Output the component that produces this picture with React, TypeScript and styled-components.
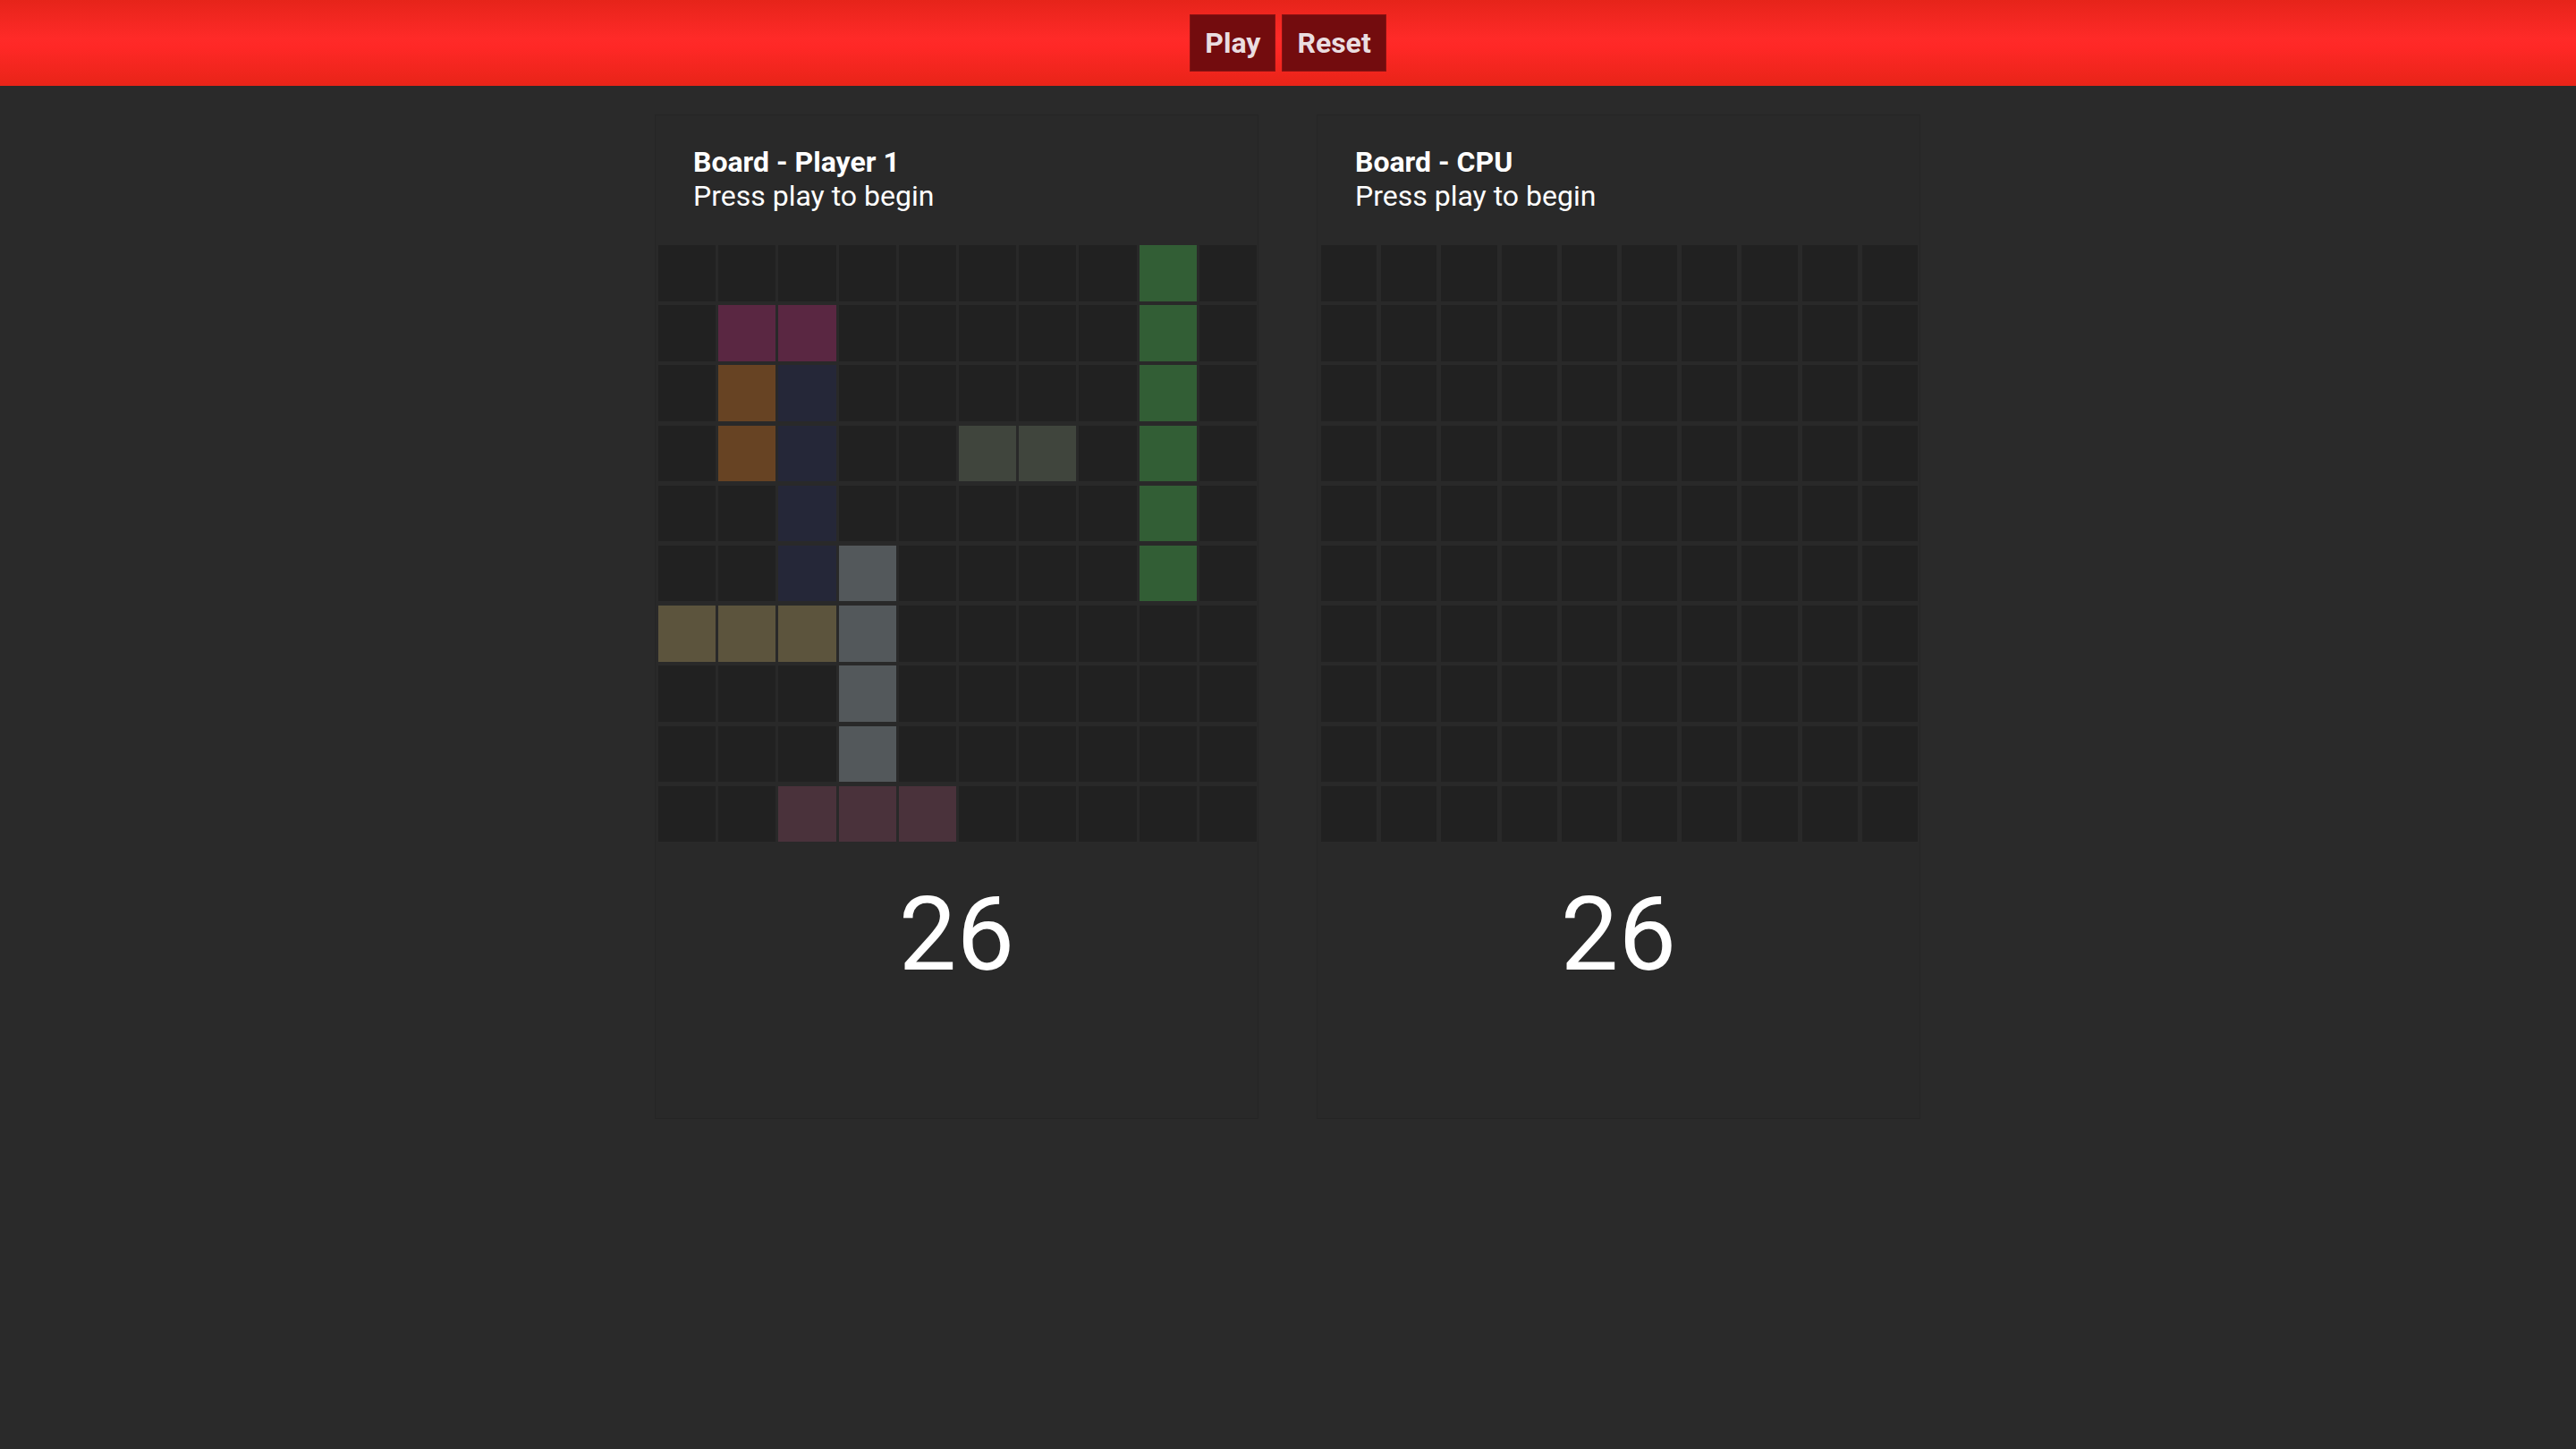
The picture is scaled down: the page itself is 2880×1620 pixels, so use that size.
import React from "react";
import styled, { createGlobalStyle } from "styled-components";

const GlobalStyle = createGlobalStyle`
  html, body {
    margin: 0;
    padding: 0;
    background: #2a2a2a;
    font-family: Roboto, "Liberation Sans", Arial, sans-serif;
    color: #ffffff;
  }
  #root {
    min-height: 1620px;
    background: #2a2a2a;
  }
`;

const Header = styled.header`
  height: 96px;
  display: flex;
  align-items: center;
  justify-content: center;
  gap: 7px;
  background: linear-gradient(to bottom, #e6241a 0%, #ff2a28 45%, #ff2826 55%, #e82418 100%);
`;

const HeaderButton = styled.button`
  height: 64px;
  padding: 0 16px;
  border: 1px solid #8a1212;
  background: #730c0e;
  color: #eadde0;
  font-family: Roboto, "Liberation Sans", Arial, sans-serif;
  font-weight: 700;
  font-size: 32px;
  cursor: pointer;
`;

const Main = styled.main`
  display: flex;
  justify-content: center;
  gap: 65px;
  padding-top: 32px;
  padding-right: 1px;
`;

const Panel = styled.section`
  width: 675px;
  height: 1123px;
  box-sizing: border-box;
  border: 1px solid #252525;
  background: #292929;
  display: flex;
  flex-direction: column;
`;

const PanelHead = styled.div`
  padding: 33px 42px 0;
  font-size: 32px;
  line-height: normal;
`;

const Title = styled.div`
  font-weight: 700;
`;

const Subtitle = styled.div`
  font-weight: 400;
`;

const Grid = styled.div<{ $pl: number; $cg: number; $w: number }>`
  margin-top: 36px;
  margin-left: ${(p) => p.$pl}px;
  width: ${(p) => p.$w}px;
  display: grid;
  grid-template-columns: repeat(10, 1fr);
  grid-auto-rows: 62.5px;
  column-gap: ${(p) => p.$cg}px;
  row-gap: 4.7px;
`;

const Cell = styled.div<{ $c?: string }>`
  background: ${(p) => p.$c || "#212121"};
`;

const Score = styled.div`
  margin-top: 35px;
  text-align: center;
  font-size: 115px;
  font-weight: 400;
  line-height: 1.2;
`;

const P = "#5a2742";
const B = "#674323";
const N = "#252738";
const G = "#40453d";
const S = "#53585b";
const O = "#5c543d";
const V = "#325e35";
const M = "#4a323b";

const playerBoard: (string | null)[][] = [
  [null, null, null, null, null, null, null, null, V, null],
  [null, P, P, null, null, null, null, null, V, null],
  [null, B, N, null, null, null, null, null, V, null],
  [null, B, N, null, null, G, G, null, V, null],
  [null, null, N, null, null, null, null, null, V, null],
  [null, null, N, S, null, null, null, null, V, null],
  [O, O, O, S, null, null, null, null, null, null],
  [null, null, null, S, null, null, null, null, null, null],
  [null, null, null, S, null, null, null, null, null, null],
  [null, null, M, M, M, null, null, null, null, null],
];

const emptyBoard: (string | null)[][] = Array.from({ length: 10 }, () =>
  Array.from({ length: 10 }, () => null)
);

type BoardProps = {
  title: string;
  cells: (string | null)[][];
  pl: number;
  cg: number;
  w: number;
};

const Board: React.FC<BoardProps> = ({ title, cells, pl, cg, w }) => (
  <Panel>
    <PanelHead>
      <Title>{title}</Title>
      <Subtitle>Press play to begin</Subtitle>
    </PanelHead>
    <Grid $pl={pl} $cg={cg} $w={w}>
      {cells.flatMap((row, r) =>
        row.map((c, i) => <Cell key={`${r}-${i}`} $c={c || undefined} />)
      )}
    </Grid>
    <Score>26</Score>
  </Panel>
);

export default function App() {
  return (
    <>
      <GlobalStyle />
      <Header>
        <HeaderButton>Play</HeaderButton>
        <HeaderButton>Reset</HeaderButton>
      </Header>
      <Main>
        <Board title="Board - Player 1" cells={playerBoard} pl={3} cg={3} w={669} />
        <Board title="Board - CPU" cells={emptyBoard} pl={4} cg={5} w={667} />
      </Main>
    </>
  );
}
